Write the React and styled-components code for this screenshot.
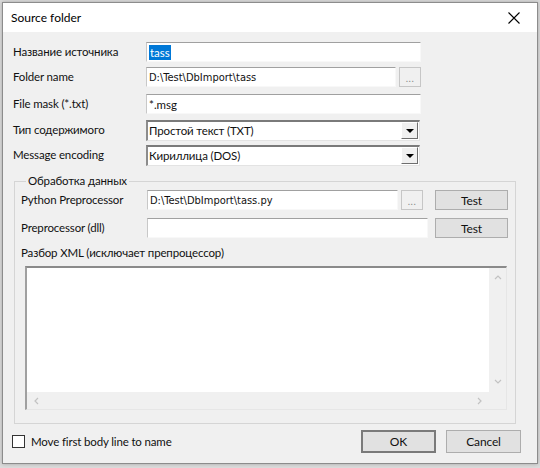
import React from "react";
import styled, { createGlobalStyle } from "styled-components";

const Global = createGlobalStyle`
  html, body { margin: 0; padding: 0; background: #dcdcdc; }
  body { width: 540px; height: 468px; overflow: hidden; font-family: "Lato", sans-serif; }
  * { box-sizing: border-box; }
`;

const UI = `"Lato", "Noto Sans", sans-serif`;
const TAHOMA = `"DejaVu Sans Condensed", "DejaVu Sans", sans-serif`;

const Window = styled.div`
  margin: 2px 0 0 2px;
  width: 536px;
  height: 462px;
  border: 1px solid #8c8c8c;
  background: #f0f0f0;
  display: flex;
  flex-direction: column;
  box-shadow: 0 0 4px rgba(0,0,0,0.25);
`;

const TitleBar = styled.div`
  height: 29px;
  background: #ffffff;
  display: flex;
  align-items: center;
  justify-content: space-between;
  padding-left: 8px;
  font-family: ${UI};
  font-size: 12px;
  color: #000;
`;

const CloseBtn = styled.div`
  width: 46px;
  height: 29px;
  display: flex;
  align-items: center;
  justify-content: center;
`;

const Client = styled.div`
  flex: 1;
  display: flex;
  flex-direction: column;
  padding: 10px 0 0 10px;
  font-family: ${UI};
  font-size: 11.5px;
  letter-spacing: -0.15px;
  color: #111;
`;

const Row = styled.div`
  display: flex;
  align-items: center;
  height: 20px;
  margin-top: ${p => p.$mt || 0}px;
`;

const Label = styled.div`
  width: ${p => p.$w || 133}px;
  flex: none;
  white-space: nowrap;
  line-height: 20px;
`;

const TextBox = styled.div`
  width: ${p => p.$w}px;
  height: 20px;
  background: #fff;
  border-top: 1px solid #a0a0a0;
  border-left: 1px solid #c8c8c8;
  border-right: 1px solid #f8f8f8;
  border-bottom: 1px solid #f8f8f8;
  display: flex;
  align-items: center;
  padding-left: 2px;
  font-family: ${p => (p.$mono ? TAHOMA : UI)};
  font-size: ${p => (p.$mono ? "11px" : "11.5px")};
  letter-spacing: 0;
  white-space: nowrap;
  overflow: hidden;
`;

const Selected = styled.span`
  background: #0078d7;
  color: #fff;
  padding: 0 1px;
  line-height: 15px;
`;

const BrowseBtn = styled.div`
  width: 22px;
  height: 20px;
  margin-left: 3px;
  border: 1px solid #c6c6c6;
  background: #f0f0f0;
  color: #8a8a8a;
  font-size: 10px;
  display: flex;
  align-items: flex-end;
  justify-content: center;
  padding-bottom: 3px;
  letter-spacing: 0.5px;
  line-height: 10px;
`;

const Select = styled.div`
  width: 274px;
  height: 21px;
  background: #fff;
  border-top: 2px solid #7a7a7a;
  border-left: 2px solid #8c8c8c;
  border-right: 1px solid #e3e3e3;
  border-bottom: 1px solid #e3e3e3;
  display: flex;
  align-items: center;
  padding-left: 1px;
  justify-content: space-between;
`;

const DropBtn = styled.div`
  width: 17px;
  height: 17px;
  background: #f0f0f0;
  border-top: 1px solid #ffffff;
  border-left: 1px solid #ffffff;
  border-right: 1px solid #6e6e6e;
  border-bottom: 1px solid #6e6e6e;
  display: flex;
  align-items: center;
  justify-content: center;
  margin-right: 1px;
`;

const Arrow = styled.div`
  width: 0;
  height: 0;
  border-left: 4px solid transparent;
  border-right: 4px solid transparent;
  border-top: 4px solid #000;
`;

const Group = styled.fieldset`
  margin: 9px 0 0 1px;
  width: 502px;
  height: 250px;
  border: 1px solid #d5d5d5;
  border-radius: 0;
  padding: 0 0 0 6px;
  display: flex;
  flex-direction: column;
`;

const Legend = styled.legend`
  padding: 0 2px;
  margin-left: 5px;
  font-size: 11.5px;
  line-height: 14px;
`;

const TestBtn = styled.div`
  width: 73px;
  height: 20px;
  margin-left: ${p => p.$ml}px;
  border: 1px solid #adadad;
  background: #e1e1e1;
  display: flex;
  align-items: center;
  justify-content: center;
  font-size: 12px;
`;

const XmlLabel = styled.div`
  margin-top: 8px;
  line-height: 14px;
`;

const Memo = styled.div`
  margin: 6px 0 0 4px;
  width: 482px;
  height: 144px;
  border-top: 2px solid #8a8a8a;
  border-left: 2px solid #a0a0a0;
  border-right: 1px solid #e6e6e6;
  border-bottom: 1px solid #e6e6e6;
  background: #fff;
  display: grid;
  grid-template-columns: 1fr 17px;
  grid-template-rows: 1fr 17px;
`;

const MemoBody = styled.div`
  background: #fff;
`;

const VScroll = styled.div`
  background: #f0f0f0;
  display: flex;
  flex-direction: column;
  justify-content: space-between;
  align-items: center;
  padding: 6px 0;
`;

const HScroll = styled.div`
  background: #f0f0f0;
  display: flex;
  justify-content: space-between;
  align-items: center;
  padding: 0 6px;
`;

const Corner = styled.div`
  background: #f0f0f0;
`;

const Footer = styled.div`
  display: flex;
  align-items: center;
  margin-top: 6px;
  height: 23px;
`;

const CheckBox = styled.div`
  width: 13px;
  height: 13px;
  border: 1px solid #333;
  background: #fff;
  margin: 0 6px 0 -1px;
`;

const FooterLabel = styled.div`
  flex: 1;
`;

const DlgBtn = styled.div`
  width: 75px;
  height: 23px;
  border: ${p => (p.$default ? "2px solid #7a7a7a" : "1px solid #adadad")};
  background: #e1e1e1;
  display: flex;
  align-items: center;
  justify-content: center;
  font-size: 12px;
  margin-right: ${p => p.$mr || 0}px;
`;

const Chevron = ({ dir }) => {
  const paths = {
    up: "M1 5 L4 2 L7 5",
    down: "M1 2 L4 5 L7 2",
    left: "M5 1 L2 4 L5 7",
    right: "M3 1 L6 4 L3 7",
  };
  return (
    <svg width="8" height="8" viewBox="0 0 8 8">
      <path d={paths[dir]} fill="none" stroke="#c2c2c2" strokeWidth="1.2" />
    </svg>
  );
};

export default function App() {
  return (
    <>
      <Global />
      <Window>
        <TitleBar>
          <span>Source folder</span>
          <CloseBtn>
            <svg width="12" height="12" viewBox="0 0 12 12">
              <path d="M0.5 0.5 L11.5 11.5 M11.5 0.5 L0.5 11.5" stroke="#000" strokeWidth="1.1" />
            </svg>
          </CloseBtn>
        </TitleBar>
        <Client>
          <Row>
            <Label>Название источника</Label>
            <TextBox $w={275}><Selected>tass</Selected></TextBox>
          </Row>
          <Row $mt={5}>
            <Label>Folder name</Label>
            <TextBox $w={250} $mono>D:\Test\DbImport\tass</TextBox>
            <BrowseBtn>...</BrowseBtn>
          </Row>
          <Row $mt={7}>
            <Label>File mask (*.txt)</Label>
            <TextBox $w={275}>*.msg</TextBox>
          </Row>
          <Row $mt={6}>
            <Label>Тип содержимого</Label>
            <Select>
              <span>Простой текст (TXT)</span>
              <DropBtn><Arrow /></DropBtn>
            </Select>
          </Row>
          <Row $mt={5}>
            <Label>Message encoding</Label>
            <Select>
              <span>Кириллица (DOS)</span>
              <DropBtn><Arrow /></DropBtn>
            </Select>
          </Row>
          <Group>
            <Legend>Обработка данных</Legend>
            <Row $mt={2}>
              <Label $w={126}>Python Preprocessor</Label>
              <TextBox $w={251} $mono>D:\Test\DbImport\tass.py</TextBox>
              <BrowseBtn>...</BrowseBtn>
              <TestBtn $ml={12}>Test</TestBtn>
            </Row>
            <Row $mt={8}>
              <Label $w={126}>Preprocessor (dll)</Label>
              <TextBox $w={281} />
              <TestBtn $ml={7}>Test</TestBtn>
            </Row>
            <XmlLabel>Разбор XML (исключает препроцессор)</XmlLabel>
            <Memo>
              <MemoBody />
              <VScroll>
                <Chevron dir="up" />
                <Chevron dir="down" />
              </VScroll>
              <HScroll>
                <Chevron dir="left" />
                <Chevron dir="right" />
              </HScroll>
              <Corner />
            </Memo>
          </Group>
          <Footer>
            <CheckBox />
            <FooterLabel>Move first body line to name</FooterLabel>
            <DlgBtn $default $mr={10}>OK</DlgBtn>
            <DlgBtn $mr={16}>Cancel</DlgBtn>
          </Footer>
        </Client>
      </Window>
    </>
  );
}
